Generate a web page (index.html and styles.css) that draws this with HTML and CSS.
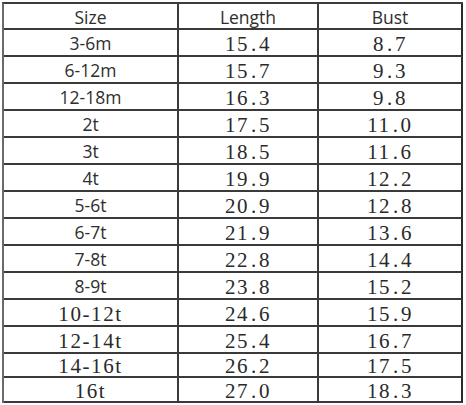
FILE: index.html
```html
<!DOCTYPE html>
<html>
<head>
<meta charset="utf-8">
<link rel="stylesheet" href="styles.css">
</head>
<body>
<div class="chart">
  <div class="cell head">Size</div><div class="cell head">Length</div><div class="cell head last">Bust</div>
  <div class="cell sans">3-6m</div><div class="cell num">15<span class="pt">.</span>4</div><div class="cell num last">8<span class="pt">.</span>7</div>
  <div class="cell sans">6-12m</div><div class="cell num">15<span class="pt">.</span>7</div><div class="cell num last">9<span class="pt">.</span>3</div>
  <div class="cell sans">12-18m</div><div class="cell num">16<span class="pt">.</span>3</div><div class="cell num last">9<span class="pt">.</span>8</div>
  <div class="cell sans">2t</div><div class="cell num">17<span class="pt">.</span>5</div><div class="cell num last">11<span class="pt">.</span>0</div>
  <div class="cell sans">3t</div><div class="cell num">18<span class="pt">.</span>5</div><div class="cell num last">11<span class="pt">.</span>6</div>
  <div class="cell sans">4t</div><div class="cell num">19<span class="pt">.</span>9</div><div class="cell num last">12<span class="pt">.</span>2</div>
  <div class="cell sans">5-6t</div><div class="cell num">20<span class="pt">.</span>9</div><div class="cell num last">12<span class="pt">.</span>8</div>
  <div class="cell sans">6-7t</div><div class="cell num">21<span class="pt">.</span>9</div><div class="cell num last">13<span class="pt">.</span>6</div>
  <div class="cell sans">7-8t</div><div class="cell num">22<span class="pt">.</span>8</div><div class="cell num last">14<span class="pt">.</span>4</div>
  <div class="cell sans">8-9t</div><div class="cell num">23<span class="pt">.</span>8</div><div class="cell num last">15<span class="pt">.</span>2</div>
  <div class="cell num">10-12t</div><div class="cell num">24<span class="pt">.</span>6</div><div class="cell num last">15<span class="pt">.</span>9</div>
  <div class="cell num">12-14t</div><div class="cell num">25<span class="pt">.</span>4</div><div class="cell num last">16<span class="pt">.</span>7</div>
  <div class="cell num">14-16t</div><div class="cell num">26<span class="pt">.</span>2</div><div class="cell num last">17<span class="pt">.</span>5</div>
  <div class="cell num">16t</div><div class="cell num">27<span class="pt">.</span>0</div><div class="cell num last">18<span class="pt">.</span>3</div>
</div>
</body>
</html>
```

FILE: styles.css
```css
html, body {
  margin: 0;
  padding: 0;
  background: #ffffff;
}

.chart {
  margin: 2px 0 0 2px;
  width: 461px;
  box-sizing: border-box;
  display: grid;
  grid-template-columns: 175px 140px 144px;
  grid-template-rows: 26px repeat(12, 27px) 24px 25px;
  border-top: 2px solid #3c3c3c;
  border-left: 2px solid #6a6a6a;
}

.cell {
  box-sizing: border-box;
  border-right: 2px solid #3a3a3a;
  border-bottom: 2px solid #3a3a3a;
  display: flex;
  align-items: center;
  justify-content: center;
  color: #222;
  white-space: nowrap;
}

.cell.last {
  border-right-color: #2a2a2a;
}

.head, .sans {
  font-family: "Open Sans", "Noto Sans", sans-serif;
  font-size: 17.5px;
  color: #2e2e2e;
  padding-top: 1px;
}

.num {
  font-family: "Liberation Serif", "Times New Roman", serif;
  font-size: 21px;
  letter-spacing: 1.6px;
  color: #2a2a2a;
  padding-top: 3px;
}

.pt {
  margin: 0 1px 0 2px;
}
```
